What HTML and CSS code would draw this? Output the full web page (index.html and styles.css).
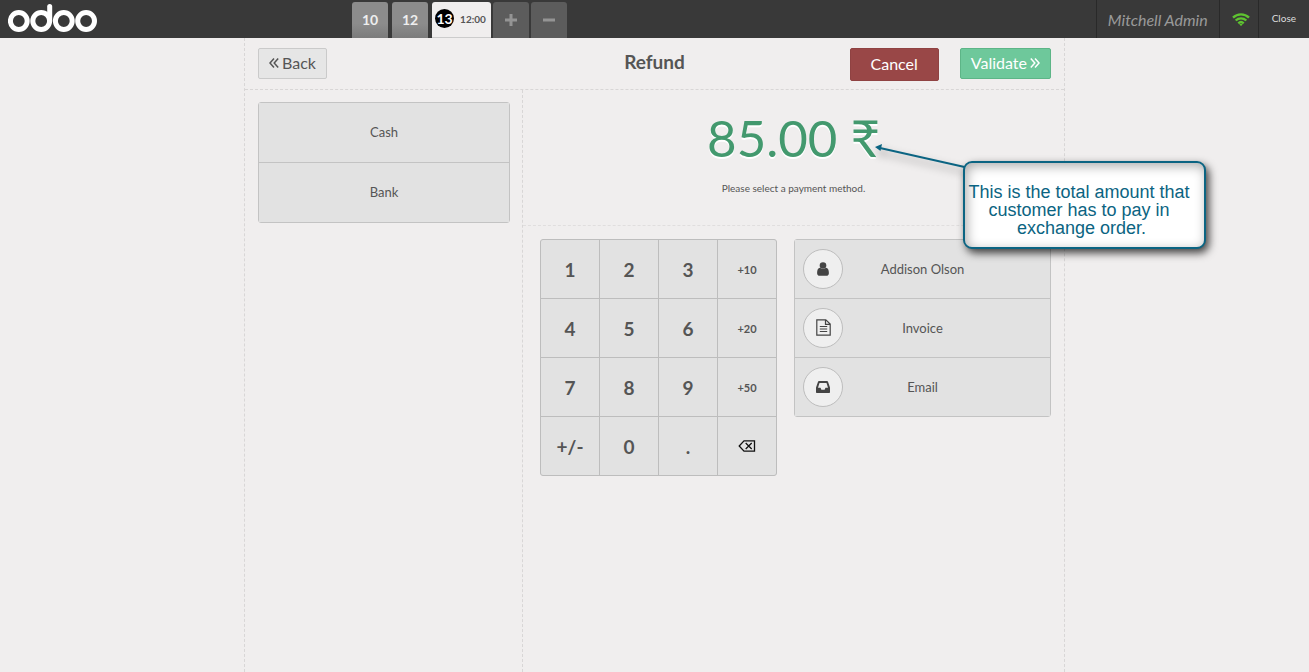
FILE: index.html
```html
<!DOCTYPE html>
<html lang="en">
<head>
<meta charset="utf-8">
<meta name="viewport" content="width=device-width, initial-scale=1">
<title>Refund</title>
<link rel="stylesheet" href="styles.css">
</head>
<body>
<header class="topbar">
  <a class="logo" href="#" aria-label="odoo">
    <svg width="90" height="30" viewBox="0 0 90 30" fill="none" stroke="#fff" stroke-width="5" stroke-linecap="round">
      <circle cx="10.800" cy="19" r="8.400"/>
      <circle cx="33.200" cy="19" r="8.400"/>
      <path d="M41.700 19V4.500"/>
      <circle cx="55.800" cy="19" r="8.400"/>
      <circle cx="78.100" cy="19" r="8.400"/>
    </svg>
  </a>
  <nav class="orders" aria-label="Orders">
    <button class="order">10</button>
    <button class="order">12</button>
    <button class="order order-active"><span class="order-number">13</span><span class="order-time">12:00</span></button>
    <span class="order-actions">
      <button class="order order-square" aria-label="New order"><svg width="12" height="12" viewBox="0 0 12 12"><path d="M4.500 0h3v4.500H12v3H7.500V12h-3V7.500H0v-3h4.500z"/></svg></button>
      <button class="order order-square" aria-label="Delete order"><svg width="12" height="12" viewBox="0 0 12 12"><path d="M0 4.500h12v3H0z"/></svg></button>
    </span>
  </nav>
  <div class="status">
    <span class="status-item username">Mitchell Admin</span>
    <span class="status-item wifi">
      <svg width="18" height="13" viewBox="0 0 18 13" fill="none" stroke="#5ec330" stroke-width="2.400" role="img" aria-label="Connected">
        <path d="M1 4.600a11.500 11.500 0 0 1 16 0M3.700 7.500a7.600 7.600 0 0 1 10.600 0M6.300 10.300a4 4 0 0 1 5.400 0"/>
        <path d="M9 10.500l1.700 1L9 13l-1.700-1.500z" fill="#5ec330" stroke="none"/>
      </svg>
    </span>
    <button class="status-item close">Close</button>
  </div>
</header>

<main class="screen">
  <div class="screen-head">
    <div class="head-side">
      <button class="btn"><svg class="angle" width="10" height="12" viewBox="0 0 10 12"><path d="M5 1.500L1 6l4 4.500M9.200 1.500L5.200 6l4 4.500"/></svg>Back</button>
    </div>
    <h1 class="title">Refund</h1>
    <div class="head-side head-end">
      <button class="btn btn-cancel">Cancel</button>
      <button class="btn btn-validate">Validate<svg class="angle" width="10" height="12" viewBox="0 0 10 12"><path d="M.8 1.500l4 4.500-4 4.500M5 1.500L9 6l-4 4.500"/></svg></button>
    </div>
  </div>

  <div class="columns">
    <section class="methods-column">
      <div class="stack methods">
        <button class="row">Cash</button>
        <button class="row">Bank</button>
      </div>
    </section>
    <section class="payment">
      <div class="summary">
        <div class="total">85.00 ₹</div>
        <p class="hint">Please select a payment method.</p>
      </div>
      <div class="controls">
        <div class="numpad">
          <button class="key">1</button><button class="key">2</button><button class="key">3</button><button class="key key-add">+10</button>
          <button class="key">4</button><button class="key">5</button><button class="key">6</button><button class="key key-add">+20</button>
          <button class="key">7</button><button class="key">8</button><button class="key">9</button><button class="key key-add">+50</button>
          <button class="key">+/-</button><button class="key">0</button><button class="key">.</button>
          <button class="key" aria-label="Backspace"><svg width="18" height="12" viewBox="0 0 18 12" fill="none" stroke="#111" stroke-width="1.300"><path d="M6 .8h10.500v10.400H6L1.200 6zM7.700 3l6 6M13.700 3l-6 6"/></svg></button>
        </div>
        <div class="stack options">
          <button class="row option">
            <span class="option-icon"><svg width="12" height="14" viewBox="0 0 12 14" fill="#444"><circle cx="6" cy="3.500" r="3.300"/><path d="M3 5.800c1.700 1.500 4.300 1.500 6 0 2 .2 2.900 2.400 2.900 5.100 0 1.700-.9 2.900-2.600 2.900H2.700C1 13.800.1 12.600.1 10.900.1 8.200 1 6 3 5.800z"/></svg></span>
            <span>Addison Olson</span>
          </button>
          <button class="row option">
            <span class="option-icon"><svg width="15" height="17" viewBox="0 0 15 17" fill="none" stroke="#444" stroke-width="1.200"><path d="M.8.800h9L14.200 5v11.200H.8zM9.500.800v4.500h4.700M3.800 7.500h7.400M3.800 10h7.400M3.800 12.500h7.400"/></svg></span>
            <span>Invoice</span>
          </button>
          <button class="row option">
            <span class="option-icon"><svg width="14" height="12" viewBox="0 0 14 12" fill="#444" fill-rule="evenodd"><path d="M3 .1h8c.5 0 .8.200 1 .6L14 6.500v4.700c0 .4-.3.700-.7.700H.7c-.4 0-.7-.3-.7-.7V6.500L2 .7c.2-.4.500-.6 1-.6zM3.500 2L2 6.700h2.500L5.400 8.700h3.200l.9-2H12L10.500 2z"/></svg></span>
            <span>Email</span>
          </button>
        </div>
      </div>
    </section>
  </div>

  <svg class="pointer" width="96" height="32" viewBox="0 0 96 32" aria-hidden="true">
    <path d="M5 6L94 26" fill="none" stroke="#0b6482" stroke-width="2"/>
    <path d="M0 5l7-3-1.500 7z" fill="#0b6482"/>
  </svg>
  <aside class="callout">This is the total amount that customer has to pay in &nbsp;exchange order.</aside>
</main>
</body>
</html>
```
FILE: styles.css
```css
* {
  box-sizing: border-box;
}

body {
  display: flex;
  flex-direction: column;
  min-height: 100vh;
  margin: 0;
  background: #f0eeee;
  color: #555;
  font-family: Lato, "Liberation Sans", sans-serif;
  font-size: 13px;
}

button {
  margin: 0;
  padding: 0;
  border: 0;
  color: inherit;
  font: inherit;
  cursor: pointer;
}

svg {
  display: block;
  flex: none;
}

.topbar {
  display: flex;
  height: 38px;
  background: #393939;
}

.logo {
  width: 352px;
  padding: 2px 8px;
}

.orders {
  display: flex;
  flex: 1;
  gap: 4px;
  padding-top: 2px;
}

.order {
  display: flex;
  align-items: center;
  justify-content: center;
  gap: 6px;
  width: 36px;
  height: 36px;
  padding-bottom: 2px;
  border-radius: 3px 3px 0 0;
  background: linear-gradient(#8c8c8c 60%, #7b7b7b);
  color: #eee;
  font-size: 14px;
  font-weight: 700;
}

.order-active {
  width: 59px;
  padding-right: 2px;
  border-bottom: 1px solid #ccc;
  background: #f0eeee;
  color: #555;
}

.order-number {
  width: 19px;
  border-radius: 50%;
  background: #000;
  color: #fff;
  line-height: 19px;
}

.order-time {
  font-size: 10px;
}

.order-actions {
  display: flex;
  gap: 2px;
  margin-left: -2px;
}

.order-square {
  padding-bottom: 0;
  background: #5c5c5c;
  fill: #949494;
}

.status {
  display: flex;
}

.status-item {
  display: flex;
  align-items: center;
  padding-bottom: 2px;
  border-left: 1px solid #292929;
}

.username {
  padding: 0 11px;
  color: #999;
  font-size: 16px;
  font-style: italic;
}

.wifi {
  padding: 0 8px 0 12px;
}

.close {
  padding: 0 13px 2px;
  border-left: 1px solid #292929;
  background: none;
  color: #ddd;
  font-size: 10px;
}

.screen {
  position: relative;
  display: flex;
  flex: 1;
  flex-direction: column;
  width: 100%;
  max-width: 821px;
  margin: 0 auto;
  border: 1px dashed #d8d6d6;
  border-width: 0 1px;
}

.screen-head {
  display: flex;
  align-items: flex-start;
  padding: 10px 13px 8px;
  border-bottom: 1px dashed #d8d6d6;
}

.head-side {
  display: flex;
  flex: 1;
}

.head-end {
  justify-content: flex-end;
  gap: 21px;
}

.title {
  margin: 0;
  font-size: 19px;
  font-weight: 700;
  line-height: 28px;
}

.btn {
  display: flex;
  align-items: center;
  gap: 3px;
  height: 31px;
  padding: 0 10px 2px;
  border: 1px solid #cacaca;
  border-radius: 2px;
  background: #e6e6e6;
  font-size: 16px;
}

.angle {
  fill: none;
  stroke: currentColor;
  stroke-width: 1.5;
}

.btn-cancel {
  height: 33px;
  padding: 0 20px 3px;
  border-color: #8f4242;
  background: #994747;
  color: #fff;
}

.btn-validate {
  border-color: #5db587;
  background: #6ec89b;
  color: #fff;
}

.columns {
  display: grid;
  flex: 1;
  grid-template-columns: 278px 1fr;
}

.methods-column {
  padding: 12px 12px 12px 13px;
  border-right: 1px dashed #d8d6d6;
}

.stack {
  display: flex;
  flex-direction: column;
  border: 1px solid #c3c3c3;
  border-radius: 3px;
}

.row {
  padding-bottom: 1px;
  background: #e2e2e2;
}

.row + .row {
  border-top: 1px solid #c3c3c3;
}

.methods .row {
  box-sizing: content-box;
  height: 58px;
}

.summary {
  padding: 19px 0 29px;
  border-bottom: 1px dashed #e0dede;
  text-align: center;
}

.total {
  color: #43996e;
  font-size: 51px;
  line-height: 58px;
  text-shadow: 0 2px 0 #fff;
}

.hint {
  margin: 14px 0 0;
  padding-bottom: 1px;
  font-size: 10px;
  line-height: 14px;
}

.controls {
  display: grid;
  grid-template-columns: 237px 1fr;
  gap: 17px;
  align-items: start;
  padding: 13px 13px 13px 17px;
}

.numpad {
  display: grid;
  grid-template-columns: repeat(4, 1fr);
  gap: 1px;
  overflow: hidden;
  border: 1px solid #bdbdbd;
  border-radius: 3px;
  background: #bdbdbd;
}

.key {
  display: flex;
  align-items: center;
  justify-content: center;
  height: 58px;
  background: #e2e2e2;
  font-size: 19px;
  font-weight: 700;
}

.key-add {
  font-size: 11px;
}

.option {
  display: grid;
  box-sizing: content-box;
  grid-template-columns: 40px 1fr 40px;
  align-items: center;
  height: 57px;
  padding: 0 8px 1px;
}

.option-icon {
  display: flex;
  align-items: center;
  justify-content: center;
  width: 40px;
  height: 40px;
  border: 1px solid #bdbdbd;
  border-radius: 50%;
  background: #efefef;
}

.pointer {
  position: absolute;
  top: 104px;
  left: 630px;
  filter: drop-shadow(2px 5px 4px #0006);
}

.callout {
  position: absolute;
  top: 123px;
  left: 718px;
  width: 243px;
  padding: 20px 13px 10px 2px;
  border: 2px solid #0b6482;
  border-radius: 9px;
  background: #fff;
  box-shadow: 3px 4px 8px #000b, inset 2px 3px 12px #0005;
  color: #0b6482;
  font-family: "Liberation Sans", Arial, sans-serif;
  font-size: 18px;
  line-height: 18px;
  text-align: center;
}
```
